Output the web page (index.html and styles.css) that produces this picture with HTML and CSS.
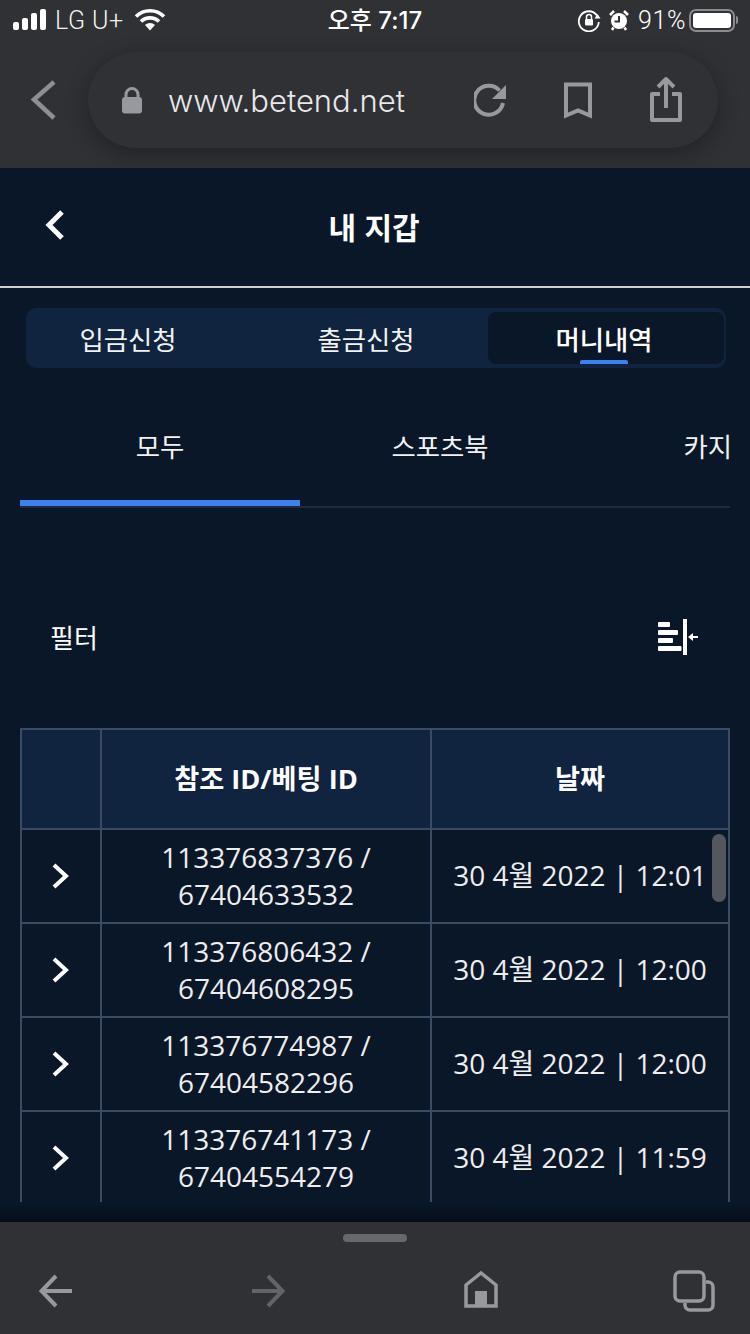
FILE: index.html
```html
<!DOCTYPE html>
<html lang="ko">
<head>
<meta charset="utf-8">
<title>내 지갑</title>
<link rel="stylesheet" href="styles.css">
</head>
<body>
<div class="screen">
  <header class="browser">
    <div class="status">
      <div class="status-left">
        <svg class="signal" width="34" height="22" viewBox="0 0 34 22"><rect x="0" y="13" width="6" height="8" rx="2"/><rect x="9" y="9" width="6" height="12" rx="2"/><rect x="18" y="4" width="6" height="17" rx="2"/><rect x="27" y="0" width="6" height="21" rx="2"/></svg>
        <span class="carrier">LG U+</span>
        <svg class="wifi" width="32" height="24" viewBox="0 0 32 24"><path d="M2 8.5a20 20 0 0 1 28 0M7 13.5a13 13 0 0 1 18 0" fill="none" stroke="#fff" stroke-width="3.6"/><path d="M11 17a7.5 7.5 0 0 1 10 0l-5 5.500z" fill="#fff"/></svg>
      </div>
      <div class="clock">오후 7:17</div>
      <div class="status-right">
        <svg width="24" height="24" viewBox="0 0 24 24"><path d="M20 7.500A10 10 0 1 0 21.800 14" fill="none" stroke="#fff" stroke-width="1.800"/><path d="M23.500 10.500h-6l3-4.500z" fill="#fff"/><rect x="8" y="11" width="8" height="6.500" rx="1.200" fill="#fff"/><path d="M9.500 11V9a2.500 2.500 0 0 1 5 0v2" fill="none" stroke="#fff" stroke-width="1.500"/></svg>
        <svg width="20" height="22" viewBox="0 0 20 22"><circle cx="10" cy="12" r="8" fill="#fff"/><path d="M10 7v5.500H5.500" fill="none" stroke="#303135" stroke-width="2"/><path d="M1 6l4-4M19 6l-4-4M4.500 18.500L3 21M15.500 18.500L17 21" stroke="#fff" stroke-width="2.500" fill="none"/></svg>
        <span class="percent">91%</span>
        <div class="battery"><div class="battery-fill"></div></div>
        <div class="battery-nub"></div>
      </div>
    </div>
    <div class="navrow">
      <svg class="nav-back" width="28" height="40" viewBox="0 0 28 40"><path d="M24 2L4 19.500 24 38" fill="none" stroke="#8e8e93" stroke-width="4.500"/></svg>
      <div class="urlbar">
        <svg class="lock" width="20" height="27" viewBox="0 0 20 27"><rect x="0" y="10" width="20" height="16.500" rx="3" fill="#98999f"/><path d="M4 11V7.500a6 6 0 0 1 12 0V11" fill="none" stroke="#98999f" stroke-width="3"/></svg>
        <span class="url">www.betend.net</span>
        <svg class="reload" width="34" height="34" viewBox="0 0 34 34"><path d="M29 20a14.500 14.500 0 1 1-3.500-12.500" fill="none" stroke="#98999f" stroke-width="4"/><path d="M32 2v14H18z" fill="#98999f"/></svg>
        <svg class="bookmark" width="30" height="37" viewBox="0 0 30 37"><path d="M3 2.500h24v31l-12-5-12 5z" fill="none" stroke="#98999f" stroke-width="4"/></svg>
        <svg class="share" width="34" height="46" viewBox="0 0 34 46"><path d="M11 17H3v26h28V17h-8" fill="none" stroke="#98999f" stroke-width="4" stroke-linejoin="round"/><path d="M17 31V4" stroke="#98999f" stroke-width="4"/><path d="M9 10l8-8 8 8" fill="none" stroke="#98999f" stroke-width="4"/></svg>
      </div>
    </div>
  </header>

  <main class="app">
    <div class="app-header">
      <svg class="app-back" width="24" height="34" viewBox="0 0 24 34"><path d="M19 4L6 17l13 13" fill="none" stroke="#fff" stroke-width="5"/></svg>
      <h1 class="app-title">내 지갑</h1>
    </div>

    <nav class="segment">
      <div class="seg-item seg-first">입금신청</div>
      <div class="seg-item seg-second">출금신청</div>
      <div class="seg-item seg-active">머니내역<span class="seg-mark"></span></div>
    </nav>

    <nav class="subtabs">
      <div class="subtab subtab-active">모두</div>
      <div class="subtab">스포츠북</div>
      <div class="subtab">카지노</div>
    </nav>

    <div class="filter">
      <span class="filter-label">필터</span>
      <svg class="filter-icon" width="40" height="36" viewBox="0 0 40 36"><g fill="#fff"><rect x="0" y="3" width="12" height="5" rx="1"/><rect x="0" y="11" width="20" height="5" rx="1"/><rect x="0" y="19" width="15" height="5" rx="1"/><rect x="0" y="27" width="23.500" height="5" rx="1"/><rect x="25" y="0" width="4" height="36"/><rect x="32" y="17" width="8" height="2"/><path d="M30 18l5-4v8z"/></g></svg>
    </div>

    <div class="table-wrap">
      <table class="money">
        <thead>
          <tr><th class="col-a"></th><th class="col-b">참조 ID/베팅 ID</th><th class="col-c">날짜</th></tr>
        </thead>
        <tbody>
          <tr><td><svg class="chev" width="18" height="28" viewBox="0 0 18 28"><path d="M3 3l12 11L3 25" fill="none" stroke="#fff" stroke-width="4"/></svg></td><td>113376837376 /<br>67404633532</td><td>30 4월 2022 | 12:01</td></tr>
          <tr><td><svg class="chev" width="18" height="28" viewBox="0 0 18 28"><path d="M3 3l12 11L3 25" fill="none" stroke="#fff" stroke-width="4"/></svg></td><td>113376806432 /<br>67404608295</td><td>30 4월 2022 | 12:00</td></tr>
          <tr><td><svg class="chev" width="18" height="28" viewBox="0 0 18 28"><path d="M3 3l12 11L3 25" fill="none" stroke="#fff" stroke-width="4"/></svg></td><td>113376774987 /<br>67404582296</td><td>30 4월 2022 | 12:00</td></tr>
          <tr><td><svg class="chev" width="18" height="28" viewBox="0 0 18 28"><path d="M3 3l12 11L3 25" fill="none" stroke="#fff" stroke-width="4"/></svg></td><td>113376741173 /<br>67404554279</td><td>30 4월 2022 | 11:59</td></tr>
        </tbody>
      </table>
      <div class="scrollthumb"></div>
    </div>
    <div class="app-fade"></div>
  </main>

  <footer class="toolbar">
    <div class="handle"></div>
    <div class="tools">
      <svg width="34" height="34" viewBox="0 0 34 34"><path d="M33 17H3M17 2L2.500 17 17 32" fill="none" stroke="#98999f" stroke-width="4"/></svg>
      <svg class="tool-forward" width="34" height="34" viewBox="0 0 34 34"><path d="M1 17h30M17 2l14.500 15L17 32" fill="none" stroke="#636468" stroke-width="4"/></svg>
      <svg class="tool-home" width="34" height="38" viewBox="0 0 34 38"><path d="M2 36V15L17 3l15 12v21z" fill="none" stroke="#98999f" stroke-width="3.500"/><rect x="11" y="21" width="12" height="15" fill="#98999f"/></svg>
      <svg width="42" height="42" viewBox="0 0 42 42"><rect x="2" y="2" width="29" height="29" rx="5" fill="none" stroke="#98999f" stroke-width="3.500"/><path d="M33 12h2a5 5 0 0 1 5 5v18a5 5 0 0 1-5 5H17a5 5 0 0 1-5-5v-2" fill="none" stroke="#98999f" stroke-width="3.500"/></svg>
    </div>
  </footer>
</div>
</body>
</html>
```
FILE: styles.css
```css
* { box-sizing: border-box; }
html, body { margin: 0; padding: 0; background: #0a1729; }
body { font-family: "Open Sans", "Noto Sans CJK KR", sans-serif; color: #fff; }

.screen { width: 750px; height: 1334px; display: flex; flex-direction: column; overflow: hidden; }

/* Browser chrome */
.browser { height: 168px; flex: none; background: #303135; display: flex; flex-direction: column; }
.status { height: 44px; flex: none; display: flex; align-items: center; justify-content: space-between; padding: 0 12px 4px 13px; position: relative; font-family: Inter, "Noto Sans CJK KR", sans-serif; }
.status-left { display: flex; align-items: center; }
.signal { fill: #fff; }
.carrier { font-size: 25px; font-weight: 300; margin-left: 8px; color: #f2f2f2; font-family: Roboto, sans-serif; letter-spacing: 0.500px; }
.wifi { margin-left: 10px; }
.clock { position: absolute; left: 0; right: 0; top: 6px; text-align: center; font-size: 24px; font-weight: 500; line-height: 30px; }
.status-right { display: flex; align-items: center; gap: 8px; }
.percent { font-size: 25px; font-weight: 300; font-family: Roboto, sans-serif; letter-spacing: 0.600px; margin-left: 1px; margin-right: -5px; }
.battery { width: 46px; height: 23px; border: 2px solid #8a8b8f; border-radius: 7px; padding: 2px; }
.battery-fill { width: 100%; height: 100%; background: #fff; border-radius: 3px; }
.battery-nub { width: 2px; height: 8px; background: #8a8b8f; margin-left: -7px; border-radius: 0 2px 2px 0; }

.navrow { display: flex; align-items: center; padding: 8px 0 0 30px; }
.nav-back { flex: none; margin-top: 0; }
.urlbar { margin-left: 30px; width: 630px; height: 96px; border-radius: 48px; background: #303135; box-shadow: 0 6px 22px rgba(0, 0, 0, 0.32); display: flex; align-items: center; padding-left: 34px; }
.lock { flex: none; }
.url { font-family: Inter, sans-serif; font-size: 31px; font-weight: 300; color: #e8e8ea; margin-left: 26px; width: 306px; white-space: nowrap; }
.reload { flex: none; margin-left: 0; }
.bookmark { flex: none; margin-left: 55px; }
.share { flex: none; margin-left: 56px; }

/* App */
.app { flex: 1; min-height: 0; background: #0a1729; display: flex; flex-direction: column; position: relative; }
.app-header { height: 120px; flex: none; border-bottom: 2px solid #d0d0d0; position: relative; display: flex; align-items: center; justify-content: center; }
.app-back { position: absolute; left: 43px; top: 40px; }
.app-title { margin: 0 2px 2px 0; font-size: 30px; font-weight: 700; line-height: 40px; font-family: "Noto Sans CJK KR", sans-serif; }

.segment { margin: 20px 24px 0 26px; height: 60px; flex: none; background: #10243f; border-radius: 10px; display: flex; padding: 4px 2px 4px 0; font-family: "Noto Sans CJK KR", sans-serif; }
.seg-item { display: flex; align-items: center; justify-content: center; font-size: 26.400px; color: #f2f2f2; position: relative; font-weight: 400; }
.seg-first { flex: 0 0 204px; margin-right: 14px; }
.seg-second { flex: 0 0 244px; }
.seg-active { flex: 1; background: #0a1729; border-radius: 8px; font-weight: 500; color: #fff; padding-right: 4px; }
.seg-mark { position: absolute; left: 92px; bottom: 0; width: 48px; height: 4px; background: #3b82f0; border-radius: 2px 2px 0 0; }

.subtabs { margin: 32px 20px 0; height: 108px; flex: none; display: flex; overflow: hidden; border-bottom: 2px solid #1e2a3d; font-family: "Noto Sans CJK KR", sans-serif; }
.subtab { flex: 0 0 280px; height: 106px; padding-top: 27px; text-align: center; font-size: 26.400px; line-height: 38px; font-weight: 400; color: #f2f2f2; }
.subtab-active { border-bottom: 6px solid #3b82f0; }

.filter { height: 220px; flex: none; padding: 38px 52px 0 50px; display: flex; align-items: center; justify-content: space-between; }
.filter-label { font-family: "Noto Sans CJK KR", sans-serif; font-size: 26px; font-weight: 400; margin-bottom: 2px; }

.table-wrap { margin: 0 20px; height: 474px; flex: none; overflow: hidden; position: relative; }
.money { width: 710px; border-collapse: separate; border-spacing: 0; table-layout: fixed; font-size: 28px; line-height: 36.500px; }
.col-a { width: 80px; }
.col-b { width: 330px; }
.col-c { width: 300px; }
.money th, .money td { border-left: 2px solid #3a4b63; border-top: 2px solid #3a4b63; text-align: center; padding: 0; }
.money th:last-child, .money td:last-child { border-right: 2px solid #3a4b63; }
.money th { height: 100px; background: #10243f; font-weight: 700; font-size: 27.200px; }
.money td { height: 94px; background: #0a1729; font-weight: 400; color: #eeeeee; padding-bottom: 1px; }
.money td:first-child { padding-bottom: 0; }
.money td:last-child { white-space: nowrap; }
.chev { display: block; margin: 0 auto 0 29px; }
.scrollthumb { position: absolute; right: 4px; top: 106px; width: 14px; height: 68px; border-radius: 7px; background: #54575d; }
.app-fade { flex: 1; background: linear-gradient(#0a1829, #050d1a); }

/* Bottom toolbar */
.toolbar { height: 112px; flex: none; background: #303135; display: flex; flex-direction: column; align-items: center; position: relative; }
.handle { width: 64px; height: 8px; border-radius: 4px; background: #66686c; margin-top: 12px; flex: none; }
.tools { width: 100%; display: flex; align-items: center; justify-content: space-between; padding: 28px 35px 0 39px; }
.tool-forward { margin-left: 3px; }
.tool-home { margin-left: 3px; margin-top: -4px; }
```
